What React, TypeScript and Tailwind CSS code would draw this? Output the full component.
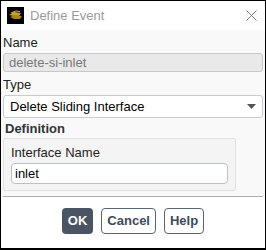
import React from "react";

function FluentIcon() {
  return (
    <div className="flex h-[17px] w-[17px] items-center justify-center bg-black">
      <svg width="15" height="11" viewBox="0 0 15 11">
        <path d="M1 5 L6 2 L13 3 L11 6 L6 6 Z" fill="#c9a227" />
        <path d="M2 7 L7 5 L14 6 L12 9 L6 9 Z" fill="#a8821a" />
        <path d="M3 3 L8 1 L12 1.5" stroke="#e0b840" strokeWidth="1" fill="none" />
      </svg>
    </div>
  );
}

export default function App() {
  const font = { fontFamily: '"Liberation Sans", Arial, sans-serif' };
  return (
    <div className="flex h-[250px] w-[266px] flex-col border border-b-2 border-black bg-[#f9f9f9] text-[13px] text-[#222]" style={font}>
      <div className="flex h-[29px] items-center bg-white pl-[6px] pr-[8px]">
        <FluentIcon />
        <span className="ml-[6px] text-[13px] text-[#9a9a9a]">Define Event</span>
        <svg className="ml-auto" width="11" height="11" viewBox="0 0 11 11">
          <path d="M0.5 0.5 L10.5 10.5 M10.5 0.5 L0.5 10.5" stroke="#7a7a7a" strokeWidth="1" />
        </svg>
      </div>

      <div className="flex flex-col px-[2px]">
        <div className="mt-[5px] leading-[15px]">Name</div>
        <div className="mt-[3px] flex h-[19px] items-center rounded-[3px] border border-[#c8c8c8] bg-[#e9e9e9] px-[5px] text-[#777]">
          delete-si-inlet
        </div>

        <div className="mt-[5px] leading-[15px]">Type</div>
        <div className="mt-[3px] flex h-[23px] items-center rounded-[3px] border border-[#c4ccd6] bg-white px-[6px] text-black">
          <span>Delete Sliding Interface</span>
          <svg className="ml-auto" width="9" height="5" viewBox="0 0 9 5">
            <path d="M0 0 L9 0 L4.5 5 Z" fill="#555" />
          </svg>
        </div>

        <div className="mt-[3px] pl-[2px] font-bold leading-[15px] text-[#333]">Definition</div>
        <div className="mt-[2px] w-[233px] rounded-[2px] border border-[#e2e2e2] bg-[#f4f4f4] px-[7px] pb-[6px] pt-[6px]">
          <div className="leading-[15px]">Interface Name</div>
          <div className="mt-[3px] flex h-[21px] items-center rounded-[4px] border border-[#b8c2ce] bg-white px-[3px] text-black">
            inlet
          </div>
        </div>

        <div className="mt-[5px] h-px bg-[#b0b0b0]" />
      </div>

      <div className="flex flex-1 items-center justify-center gap-[8px] bg-white pb-[3px]">
        <button className="h-[26px] rounded-[4px] bg-[#4a5563] px-[6px] font-bold text-white">OK</button>
        <button className="h-[26px] rounded-[4px] border border-[#5a6472] bg-white px-[5px] font-bold text-[#3d4a5c]">Cancel</button>
        <button className="h-[26px] rounded-[4px] border border-[#5a6472] bg-white px-[5px] font-bold text-[#3d4a5c]">Help</button>
      </div>
    </div>
  );
}
